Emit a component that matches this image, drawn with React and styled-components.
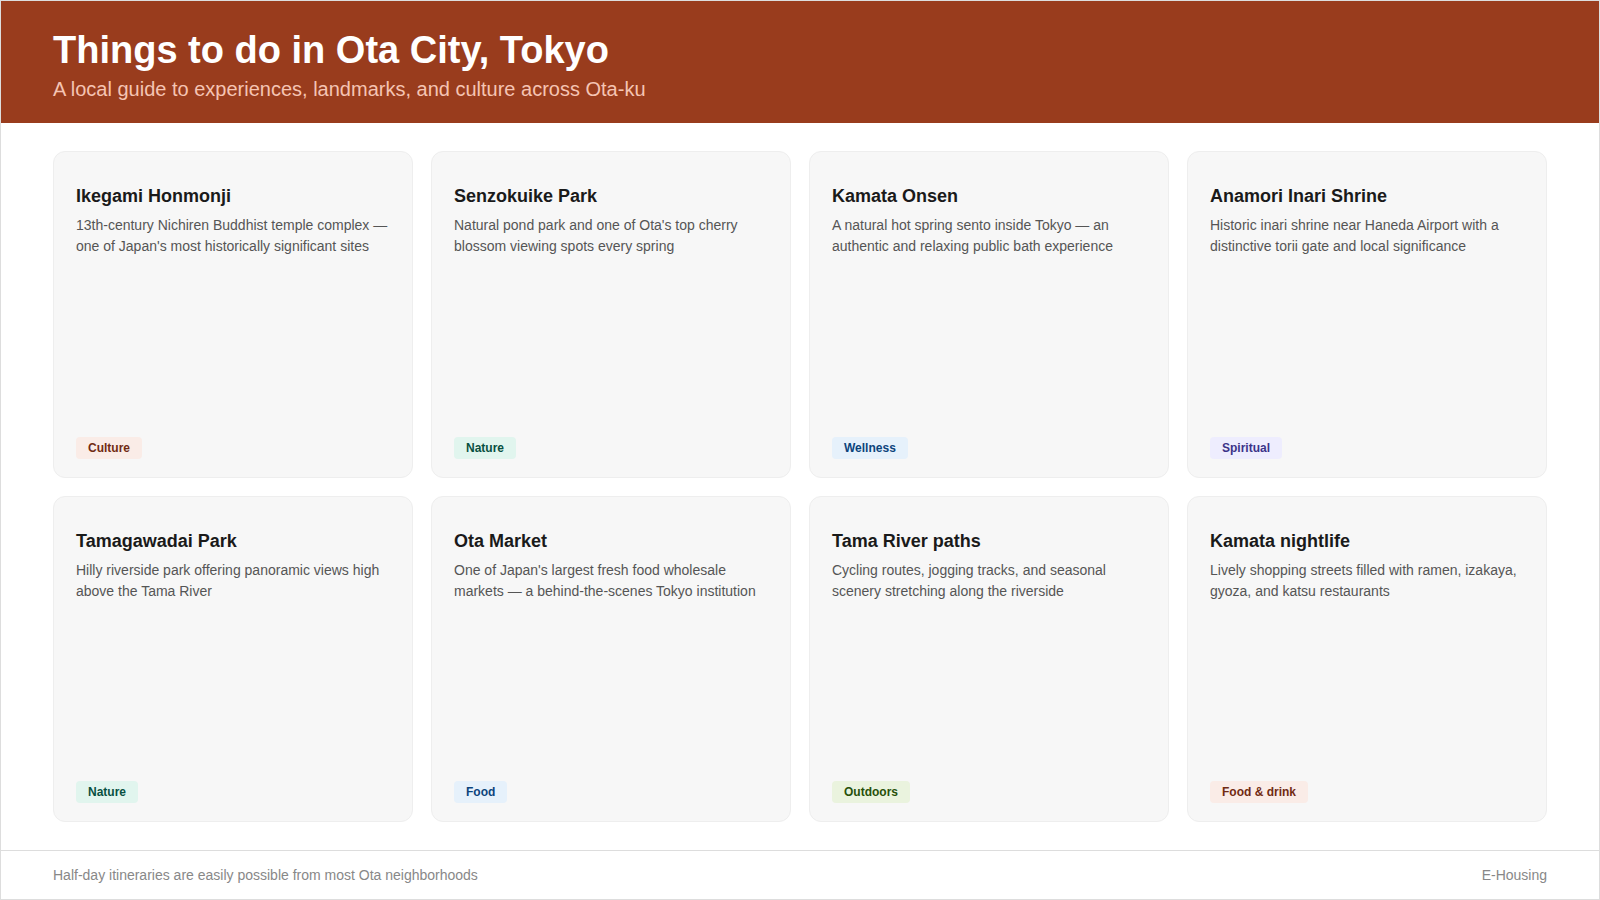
import styled, { createGlobalStyle } from "styled-components";

const GlobalStyle = createGlobalStyle`
  html, body {
    margin: 0;
    padding: 0;
    background: #fff;
  }
  * {
    box-sizing: border-box;
  }
`;

const Page = styled.div`
  width: 1600px;
  height: 900px;
  display: flex;
  flex-direction: column;
  border: 1px solid #ddd;
  font-family: "Liberation Sans", Arial, sans-serif;
  background: #fff;
`;

const Header = styled.header`
  height: 122px;
  flex: none;
  background: #993c1d;
  padding: 27px 52px 0;
`;

const Title = styled.h1`
  margin: 0;
  font-size: 38px;
  line-height: 44px;
  font-weight: 700;
  color: #fff;
`;

const Subtitle = styled.p`
  margin: 5px 0 0;
  font-size: 20px;
  line-height: 24px;
  color: #f5c4b3;
`;

const Grid = styled.main`
  flex: 1;
  min-height: 0;
  display: grid;
  grid-template-columns: repeat(4, 1fr);
  grid-template-rows: repeat(2, 1fr);
  gap: 18px;
  padding: 28px 52px;
`;

const Card = styled.article`
  display: flex;
  flex-direction: column;
  align-items: flex-start;
  background: #f7f7f7;
  border: 1px solid #eee;
  border-radius: 12px;
  padding: 33px 22px 18px;
`;

const CardTitle = styled.h2`
  margin: 0 0 8px;
  font-size: 18px;
  line-height: 22px;
  font-weight: 700;
  color: #1a1a1a;
`;

const CardText = styled.p`
  margin: 0;
  font-size: 14px;
  line-height: 21px;
  color: #555;
`;

const tagColors = {
  coral: ["#faece7", "#712b13"],
  teal: ["#e1f5ee", "#085041"],
  blue: ["#e6f1fb", "#0c447c"],
  purple: ["#eeedfe", "#3c3489"],
  green: ["#eaf3de", "#27500a"],
};

const Tag = styled.span`
  margin-top: auto;
  padding: 4px 12px;
  border-radius: 4px;
  font-size: 12px;
  line-height: 14px;
  font-weight: 700;
  background: ${(p) => tagColors[p.$tone][0]};
  color: ${(p) => tagColors[p.$tone][1]};
`;

const Footer = styled.footer`
  height: 49px;
  flex: none;
  display: flex;
  align-items: center;
  justify-content: space-between;
  border-top: 1px solid #ddd;
  padding: 0 52px;
  font-size: 14px;
  color: #888;
`;

const places = [
  {
    name: "Ikegami Honmonji",
    text: "13th-century Nichiren Buddhist temple complex — one of Japan's most historically significant sites",
    tag: "Culture",
    tone: "coral",
  },
  {
    name: "Senzokuike Park",
    text: "Natural pond park and one of Ota's top cherry blossom viewing spots every spring",
    tag: "Nature",
    tone: "teal",
  },
  {
    name: "Kamata Onsen",
    text: "A natural hot spring sento inside Tokyo — an authentic and relaxing public bath experience",
    tag: "Wellness",
    tone: "blue",
  },
  {
    name: "Anamori Inari Shrine",
    text: "Historic inari shrine near Haneda Airport with a distinctive torii gate and local significance",
    tag: "Spiritual",
    tone: "purple",
  },
  {
    name: "Tamagawadai Park",
    text: "Hilly riverside park offering panoramic views high above the Tama River",
    tag: "Nature",
    tone: "teal",
  },
  {
    name: "Ota Market",
    text: "One of Japan's largest fresh food wholesale markets — a behind-the-scenes Tokyo institution",
    tag: "Food",
    tone: "blue",
  },
  {
    name: "Tama River paths",
    text: "Cycling routes, jogging tracks, and seasonal scenery stretching along the riverside",
    tag: "Outdoors",
    tone: "green",
  },
  {
    name: "Kamata nightlife",
    text: "Lively shopping streets filled with ramen, izakaya, gyoza, and katsu restaurants",
    tag: "Food & drink",
    tone: "coral",
  },
];

export default function App() {
  return (
    <>
      <GlobalStyle />
      <Page>
        <Header>
          <Title>Things to do in Ota City, Tokyo</Title>
          <Subtitle>A local guide to experiences, landmarks, and culture across Ota-ku</Subtitle>
        </Header>
        <Grid>
          {places.map((place) => (
            <Card key={place.name}>
              <CardTitle>{place.name}</CardTitle>
              <CardText>{place.text}</CardText>
              <Tag $tone={place.tone}>{place.tag}</Tag>
            </Card>
          ))}
        </Grid>
        <Footer>
          <span>Half-day itineraries are easily possible from most Ota neighborhoods</span>
          <span>E-Housing</span>
        </Footer>
      </Page>
    </>
  );
}
